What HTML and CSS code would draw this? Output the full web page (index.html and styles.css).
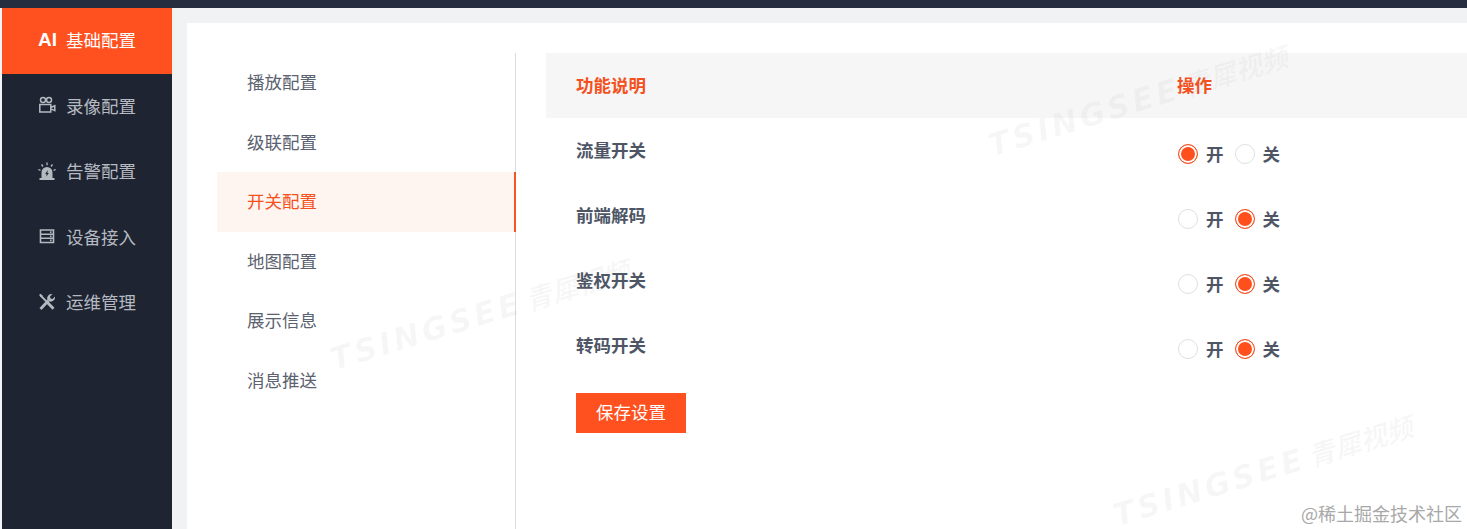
FILE: index.html
```html
<!DOCTYPE html>
<html lang="zh-CN">
<head>
    <meta charset="UTF-8">
    <title>基础配置</title>
    <link rel="stylesheet" href="styles.css">
</head>
<body>
    <div class="topbar"></div>
    <div class="layout">
        <div class="sidebar">
            <div class="side-item active">
                <span class="side-icon ai">AI</span>
                <span>基础配置</span>
            </div>
            <div class="side-item">
                <svg class="side-icon" viewBox="0 0 18 18" fill="none" stroke="currentColor" stroke-width="1.5">
                    <circle cx="5" cy="4" r="2.500"/>
                    <circle cx="11" cy="4" r="2.500"/>
                    <path d="M1.800 8.500h11v7.500h-11zM12.800 11.500l4-1.800v5l-4-1.800"/>
                </svg>
                <span>录像配置</span>
            </div>
            <div class="side-item">
                <svg class="side-icon" viewBox="0 0 18 18">
                    <path fill="currentColor" d="M3.500 16V10.500a5.500 5.500 0 0 1 11 0V16zM1.500 16h15v2h-15z"/>
                    <path fill="#1e2431" d="M9.800 8 7.200 12h1.500l-.5 2.800L10.800 11H9.300z"/>
                    <path stroke="currentColor" stroke-width="1.300" d="M9 .5v2.800M3.500 2.500l1.500 2M14.500 2.500l-1.500 2M.3 7.500l2.200.8M17.700 7.500l-2.200.8"/>
                </svg>
                <span>告警配置</span>
            </div>
            <div class="side-item">
                <svg class="side-icon" viewBox="0 0 18 18" fill="none" stroke="currentColor" stroke-width="1.600">
                    <path d="M2.500 3h13v12.500h-13zM2.500 7.200h13M2.500 11.300h13"/>
                    <path d="M12 5.100h1.500M12 9.200h1.500M12 13.400h1.500"/>
                </svg>
                <span>设备接入</span>
            </div>
            <div class="side-item">
                <svg class="side-icon" viewBox="0 0 18 18" fill="none" stroke="currentColor">
                    <path stroke-width="2.800" d="M2.500 16 10.500 7.500M8.500 8.500 15.500 15.800"/>
                    <path stroke-width="1.800" d="M2.500 2.500 9 9"/>
                    <path fill="currentColor" stroke="none" d="M10.500 2.300a4.300 4.300 0 0 1 4-1.300L12 3.500l.5 2 2 .5 2.500-2.500a4.300 4.300 0 0 1-5.800 4.800L9.200 6.500a4.300 4.300 0 0 1 1.300-4.200zM1 2l1.500-1.300L5 3 3.500 4.500z"/>
                </svg>
                <span>运维管理</span>
            </div>
        </div>

        <div class="content">
            <div class="panel">
                <div class="tabs">
                    <div class="tab">播放配置</div>
                    <div class="tab">级联配置</div>
                    <div class="tab active">开关配置</div>
                    <div class="tab">地图配置</div>
                    <div class="tab">展示信息</div>
                    <div class="tab">消息推送</div>
                </div>

                <div class="main">
                    <div class="row head">
                        <div class="col-name">功能说明</div>
                        <div class="col-op">操作</div>
                    </div>
                    <div class="row">
                        <div class="col-name">流量开关</div>
                        <div class="col-op">
                            <span class="radio on"></span><span class="radio-label">开</span>
                            <span class="radio"></span><span class="radio-label">关</span>
                        </div>
                    </div>
                    <div class="row">
                        <div class="col-name">前端解码</div>
                        <div class="col-op">
                            <span class="radio"></span><span class="radio-label">开</span>
                            <span class="radio on"></span><span class="radio-label">关</span>
                        </div>
                    </div>
                    <div class="row">
                        <div class="col-name">鉴权开关</div>
                        <div class="col-op">
                            <span class="radio"></span><span class="radio-label">开</span>
                            <span class="radio on"></span><span class="radio-label">关</span>
                        </div>
                    </div>
                    <div class="row">
                        <div class="col-name">转码开关</div>
                        <div class="col-op">
                            <span class="radio"></span><span class="radio-label">开</span>
                            <span class="radio on"></span><span class="radio-label">关</span>
                        </div>
                    </div>
                    <button class="btn-save">保存设置</button>
                </div>
            </div>
        </div>
    </div>

    <!-- 水印 -->
    <div class="mark mark-1">TSINGSEE<span>青犀视频</span></div>
    <div class="mark mark-2">TSINGSEE<span>青犀视频</span></div>
    <div class="mark mark-3">TSINGSEE<span>青犀视频</span></div>
    <div class="juejin">@稀土掘金技术社区</div>
</body>
</html>
```

FILE: styles.css
```css
* {
    margin: 0;
    padding: 0;
    box-sizing: border-box;
}

html, body {
    height: 100%;
    overflow: hidden;
}

body {
    font-family: "Noto Sans CJK SC", "Noto Sans", sans-serif;
    background: #fff;
    color: #4e5666;
    display: flex;
    flex-direction: column;
}

.topbar {
    height: 8px;
    background: #252d3e;
    flex-shrink: 0;
}

.layout {
    flex: 1;
    display: flex;
    min-height: 0;
    padding-left: 2px;
    background: #f3f4f5;
}

.sidebar {
    width: 170px;
    background: #1e2431;
    flex-shrink: 0;
}

.side-item {
    height: 65.5px;
    display: flex;
    align-items: center;
    padding: 0 0 2px 36px;
    font-size: 17.500px;
    color: #b5b9c0;
}

.side-item.active {
    background: #ff5020;
    color: #fff;
}

.side-icon {
    width: 18px;
    height: 18px;
    margin-right: 10px;
    flex-shrink: 0;
}

.ai {
    width: auto;
    height: auto;
    margin-right: 9px;
    font-family: "Liberation Sans", sans-serif;
    font-weight: bold;
    font-size: 19px;
}

.content {
    flex: 1;
    min-width: 0;
    padding: 15px 0 0 15px;
    background: #f1f2f3;
}

.panel {
    height: 100%;
    background: #fff;
    display: flex;
    padding: 30px 0 0 30px;
}

.tabs {
    width: 299px;
    border-right: 1px solid #dcdcdc;
    flex-shrink: 0;
}

.tab {
    height: 59.5px;
    line-height: 58.500px;
    padding-left: 30px;
    font-size: 17.500px;
    color: #5b6270;
    margin-right: -1px;
}

.tab.active {
    background: #fff5f0;
    color: #f4511e;
    border-right: 2px solid #f0562a;
}

.main {
    flex: 1;
    min-width: 0;
    margin-left: 30px;
}

.row {
    height: 65px;
    display: flex;
    padding-left: 30px;
    font-size: 17.500px;
    font-weight: bold;
    color: #4e5666;
}

.row.head {
    height: 65px;
    padding-bottom: 2px;
    background: #f6f6f6;
    color: #f4511e;
    align-items: center;
}

.col-name {
    width: 601px;
    padding-top: 18px;
    line-height: 27px;
}

.head .col-name {
    padding-top: 0;
}

.col-op {
    display: flex;
    align-items: center;
    height: 27px;
    margin-top: 22px;
}

.head .col-op {
    margin-top: 0;
}

.radio {
    width: 20px;
    height: 20px;
    border-radius: 50%;
    border: 1px solid #dfdfdf;
    background: #fff;
    flex-shrink: 0;
    margin-left: 1px;
}

.radio.on {
    border-color: #f0562a;
    background: #ff4f1c;
    box-shadow: inset 0 0 0 2px #fff;
}

.radio-label {
    margin: 0 10px 0 8px;
    font-size: 17.500px;
}

.btn-save {
    display: block;
    width: 110px;
    height: 40px;
    margin: 15px 0 0 30px;
    padding-bottom: 3px;
    border: none;
    background: #ff5020;
    color: #fff;
    font-family: inherit;
    font-size: 17.500px;
}

/* 水印 */
.mark {
    position: absolute;
    transform: rotate(-17deg);
    transform-origin: left bottom;
    font-family: "DejaVu Sans", sans-serif;
    font-weight: bold;
    font-style: italic;
    font-size: 31px;
    line-height: 40px;
    letter-spacing: 3.500px;
    color: rgba(120, 120, 120, 0.06);
    white-space: nowrap;
}

.mark span {
    font-family: "Noto Sans CJK SC", sans-serif;
    font-size: 27px;
    letter-spacing: 0;
    margin-left: 4px;
}

.mark-1 {
    left: 995px;
    top: 125px;
}

.mark-2 {
    left: 337px;
    top: 339px;
}

.mark-3 {
    left: 1120px;
    top: 495px;
}

.juejin {
    position: absolute;
    right: 5px;
    bottom: 3px;
    font-size: 18px;
    line-height: 26px;
    color: #a8a8a8;
}
```
